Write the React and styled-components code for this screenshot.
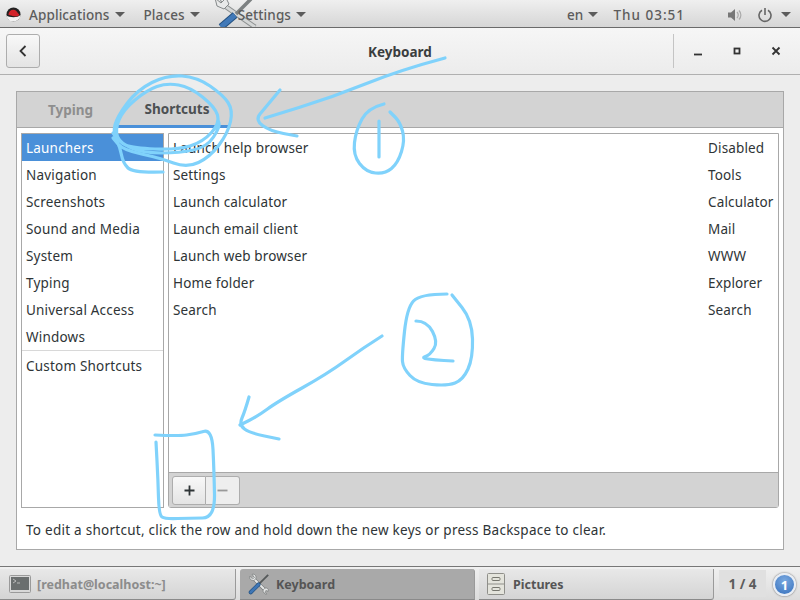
import React from "react";
import styled, { createGlobalStyle } from "styled-components";

const launchers = [
  ["Launch help browser", "Disabled"],
  ["Settings", "Tools"],
  ["Launch calculator", "Calculator"],
  ["Launch email client", "Mail"],
  ["Launch web browser", "WWW"],
  ["Home folder", "Explorer"],
  ["Search", "Search"],
];

const categories = [
  "Launchers",
  "Navigation",
  "Screenshots",
  "Sound and Media",
  "System",
  "Typing",
  "Universal Access",
  "Windows",
];

// hand-drawn marks, given as points and smoothed through their midpoints
const smooth = (pts) => {
  let d = `M${pts[0][0]} ${pts[0][1]}`;
  for (let i = 1; i < pts.length - 1; i++) {
    const mx = (pts[i][0] + pts[i + 1][0]) / 2;
    const my = (pts[i][1] + pts[i + 1][1]) / 2;
    d += `Q${pts[i][0]} ${pts[i][1]} ${mx} ${my}`;
  }
  const last = pts[pts.length - 1];
  return `${d}L${last[0]} ${last[1]}`;
};

const marks = [
  [[163, 172], [133, 173], [123, 163], [120, 147], [113, 133], [117, 117], [137, 90], [167, 75], [197, 77], [223, 95], [233, 110], [228, 133], [210, 157], [187, 168], [160, 158], [123, 150], [113, 138]],
  [[113, 133], [120, 143], [133, 148], [177, 150], [203, 142], [220, 123], [215, 107], [190, 87], [167, 83], [147, 90], [123, 110], [115, 130], [120, 143], [143, 153], [180, 153], [207, 147], [220, 127], [218, 120]],
  [[445, 58], [400, 70], [333, 97], [265, 118]],
  [[280, 90], [265, 108], [255, 120], [270, 131], [297, 136]],
  [[384, 104], [368, 108], [356, 130], [353, 155], [366, 172], [385, 174], [398, 163], [405, 140], [400, 122], [390, 112]],
  [[379, 121], [379, 157]],
  [[447, 294], [420, 294], [407, 308], [402, 355], [403, 368], [417, 383], [447, 386], [463, 380], [473, 358], [472, 320], [452, 295]],
  [[416, 321], [427, 321], [438, 342], [430, 355], [421, 358], [435, 360], [453, 361]],
  [[382, 336], [363, 348], [327, 374], [277, 402], [258, 416], [240, 425]],
  [[249, 397], [245, 411], [239, 425], [250, 433], [279, 439]],
  [[155, 435], [178, 436], [195, 434], [212, 429], [214, 470], [215, 518], [190, 518], [165, 519], [159, 515], [158, 480], [156, 442]],
];

const Annotations = () => (
  <Ink viewBox="0 0 800 600">
    {marks.map((pts, i) => (
      <path key={i} d={smooth(pts)} />
    ))}
  </Ink>
);

const ToolsIcon = ({ size = 22 }) => (
  <svg width={size} height={size} viewBox="0 0 24 24">
    <path d="M5 5L20 20" stroke="#6f7373" strokeWidth="3.600" />
    <path d="M5 5L20 20" stroke="#e6e7e7" strokeWidth="2.200" />
    <path d="M2 3.500L5 6.500 7 5 4.500 1.500C7 0.500 9.500 3 8.500 6L7 8C4 9 1 6.500 2 3.500z" fill="#e6e7e7" stroke="#6f7373" strokeWidth="0.700" />
    <path d="M22 20L19.500 19 18.500 21 20.500 23C18 23.500 16 21 16.500 18.500L18.500 16.500C21 16 23 17.500 22 20z" fill="#e6e7e7" stroke="#6f7373" strokeWidth="0.700" />
    <path d="M22 2L11 13" stroke="#55595a" strokeWidth="2" />
    <path d="M11.500 12.500L3 21" stroke="#23507f" strokeWidth="4.400" strokeLinecap="round" />
    <path d="M11.500 12.500L3 21" stroke="#3f76b5" strokeWidth="3" strokeLinecap="round" />
  </svg>
);

const App = () => (
  <Screen>
    <GlobalStyle />
    <TopBar>
      <MenuGroup>
        <RedHat viewBox="0 0 16 16">
          <circle cx="8" cy="8" r="7.500" fill="#222" />
          <path d="M0.600 9C3 11 12 12 15.400 8.500C15.600 12 12 15.500 8 15.500C4 15.500 1 13 0.600 9z" fill="#f2f2f2" />
          <path d="M2.500 8C3 5 5 3 8 3C10 3 11 4 12 5.500L14 8C14.500 10 10 10.500 7 9.500C5 9 3 8.800 2.500 8z" fill="#d2232a" />
        </RedHat>
        <MenuLabel>Applications</MenuLabel>
        <Caret />
        <PlacesLabel>Places</PlacesLabel>
        <Caret />
        <SettingsItem>
          <BigTools viewBox="0 0 46 27">
            <path d="M4 2L40 27" stroke="#8b8f8f" strokeWidth="5" />
            <path d="M4 2L40 27" stroke="#d4d6d6" strokeWidth="3" />
            <path d="M0 -2L6 3 11 -2 14 4 9 9 2 6z" fill="#e8e9e9" stroke="#85898a" strokeWidth="1" />
            <path d="M36 -1L21 14" stroke="#7d8182" strokeWidth="3.500" />
            <path d="M20 15L6 27" stroke="#23507f" strokeWidth="7" />
            <path d="M20 15L6 27" stroke="#4179b8" strokeWidth="5" />
          </BigTools>
          <SettingsLabel>Settings</SettingsLabel>
          <Caret />
        </SettingsItem>
      </MenuGroup>
      <StatusGroup>
        <MenuLabel>en</MenuLabel>
        <Caret />
        <Clock>Thu 03:51</Clock>
        <svg width="16" height="16" viewBox="0 0 16 16">
          <path d="M1 5.500h3L8 2v12L4 10.500H1z" fill="#777" />
          <path d="M10 5c1.500 1.800 1.500 4.200 0 6M12 3.500c2.500 2.600 2.500 6.400 0 9" fill="none" stroke="#aaa" strokeWidth="1.200" />
        </svg>
        <PowerIcon width="16" height="16" viewBox="0 0 16 16">
          <path d="M5 3.200a6 6 0 1 0 6 0M8 1v7" fill="none" stroke="#666" strokeWidth="1.600" />
        </PowerIcon>
        <Caret />
      </StatusGroup>
    </TopBar>

    <HeaderBar>
      <BackButton>
        <svg width="12" height="14" viewBox="0 0 12 14">
          <path d="M8.500 2L3.500 7l5 5" fill="none" stroke="#333" strokeWidth="1.800" />
        </svg>
      </BackButton>
      <Title>Keyboard</Title>
      <WindowControls>
        <svg width="10" height="10" viewBox="0 0 10 10">
          <path d="M1 8.500h8" stroke="#333" strokeWidth="1.800" />
        </svg>
        <svg width="10" height="10" viewBox="0 0 10 10">
          <rect x="2.500" y="2.500" width="5" height="5" fill="none" stroke="#333" strokeWidth="1.800" />
        </svg>
        <svg width="10" height="10" viewBox="0 0 10 10">
          <path d="M1.500 1.500l7 7M8.500 1.500l-7 7" stroke="#333" strokeWidth="1.800" />
        </svg>
      </WindowControls>
    </HeaderBar>

    <Content>
      <Notebook>
        <TabStrip>
          <Tab>Typing</Tab>
          <Tab $active>Shortcuts</Tab>
        </TabStrip>
        <TabBody>
          <Panes>
            <Sidebar>
              {categories.map((name, i) => (
                <SideRow key={name} $selected={i === 0}>{name}</SideRow>
              ))}
              <SideDivider />
              <SideRow>Custom Shortcuts</SideRow>
            </Sidebar>
            <ShortcutPane>
              <ShortcutList>
                {launchers.map(([name, key]) => (
                  <ShortcutRow key={name}>
                    <span>{name}</span>
                    <KeyCell>{key}</KeyCell>
                  </ShortcutRow>
                ))}
              </ShortcutList>
              <PaneToolbar>
                <PlusButton>
                  <svg width="11" height="11" viewBox="0 0 11 11">
                    <path d="M5.500 0.500v10M0.500 5.500h10" stroke="#2e3436" strokeWidth="1.800" />
                  </svg>
                </PlusButton>
                <MinusButton>
                  <svg width="11" height="11" viewBox="0 0 11 11">
                    <path d="M0.500 5.500h10" stroke="#999" strokeWidth="1.800" />
                  </svg>
                </MinusButton>
              </PaneToolbar>
            </ShortcutPane>
          </Panes>
          <Hint>To edit a shortcut, click the row and hold down the new keys or press Backspace to clear.</Hint>
        </TabBody>
      </Notebook>
    </Content>

    <TaskBar>
      <TaskButton $first>
        <svg width="22" height="18" viewBox="0 0 22 18">
          <rect x="0.500" y="0.500" width="21" height="17" rx="1" fill="#d8d8d8" stroke="#9a9a9a" />
          <rect x="2" y="2" width="18" height="13" fill="#6a6e6e" />
          <path d="M4 4l3 2-3 2M8 8h3" fill="none" stroke="#ccc" strokeWidth="0.800" />
        </svg>
        <TerminalLabel>[redhat@localhost:~]</TerminalLabel>
      </TaskButton>
      <TaskButton $active>
        <ToolsIcon />
        <TaskLabel>Keyboard</TaskLabel>
      </TaskButton>
      <TaskButton>
        <svg width="18" height="22" viewBox="0 0 18 22">
          <rect x="0.500" y="0.500" width="17" height="21" rx="1" fill="#e4e4dc" stroke="#8f8f8a" />
          <path d="M1 11h16" stroke="#8f8f8a" />
          <rect x="5" y="4.500" width="8" height="3" rx="1" fill="none" stroke="#77776f" />
          <rect x="5" y="14.500" width="8" height="3" rx="1" fill="none" stroke="#77776f" />
        </svg>
        <PicturesLabel>Pictures</PicturesLabel>
      </TaskButton>
      <Pager>1 / 4</Pager>
      <Badge>1</Badge>
    </TaskBar>

    <Annotations />
  </Screen>
);

const GlobalStyle = createGlobalStyle`
  html, body {
    margin: 0;
    padding: 0;
    background: #ededed;
  }
  * {
    box-sizing: border-box;
  }
`;

const Screen = styled.div`
  position: relative;
  width: 800px;
  height: 600px;
  display: flex;
  flex-direction: column;
  overflow: hidden;
  font-family: "Noto Sans", "Open Sans", sans-serif;
  font-size: 13.5px;
  color: #2e3436;
  background: #ededed;
`;

const Ink = styled.svg`
  position: absolute;
  left: 0;
  top: 0;
  width: 800px;
  height: 600px;
  pointer-events: none;

  path {
    fill: none;
    stroke: #80d2fb;
    stroke-width: 3.2;
    stroke-linecap: round;
    stroke-linejoin: round;
  }
`;

const TopBar = styled.header`
  height: 28px;
  flex: none;
  display: flex;
  align-items: center;
  justify-content: space-between;
  padding: 2px 9px 0 6px;
  background: linear-gradient(#efefef, #d6d6d6);
  border-bottom: 1px solid #6a6a6a;
  color: #5c5c5c;
  font-weight: 500;
`;

const MenuGroup = styled.div`
  display: flex;
  align-items: center;
`;

const StatusGroup = styled.div`
  display: flex;
  align-items: center;
`;

const RedHat = styled.svg`
  width: 15px;
  height: 15px;
  margin-right: 8px;
`;

const MenuLabel = styled.span`
  position: relative;
  letter-spacing: 0.1px;
`;

const PlacesLabel = styled(MenuLabel)`
  margin-left: 19px;
`;

const SettingsItem = styled.div`
  position: relative;
  display: flex;
  align-items: center;
  margin-left: 38px;
`;

// the oversized launcher icon sits behind the label, cut off by the panel edges
const BigTools = styled.svg`
  position: absolute;
  left: -23px;
  top: -6px;
  width: 46px;
  height: 27px;
`;

const SettingsLabel = styled(MenuLabel)``;

const Caret = styled.i`
  width: 0;
  height: 0;
  margin-left: 5px;
  border-left: 5px solid transparent;
  border-right: 5px solid transparent;
  border-top: 5px solid #5c5c5c;
`;

const Clock = styled.span`
  margin: 0 42px 0 15px;
  letter-spacing: 1px;
`;

const PowerIcon = styled.svg`
  margin-left: 14px;
  margin-right: 3px;
`;

const HeaderBar = styled.div`
  height: 47px;
  flex: none;
  display: flex;
  align-items: center;
  justify-content: space-between;
  position: relative;
  padding: 0 0 0 6px;
  background: linear-gradient(#f6f6f6, #ececec);
  border-bottom: 1px solid #b0b0b0;
`;

const BackButton = styled.button`
  width: 34px;
  height: 34px;
  padding: 0;
  display: flex;
  align-items: center;
  justify-content: center;
  background: linear-gradient(#f8f8f8, #e4e4e4);
  border: 1px solid #adadad;
  border-radius: 3px;
`;

const Title = styled.div`
  position: absolute;
  left: 0;
  right: 0;
  padding-top: 2px;
  text-align: center;
  font-weight: 700;
  font-size: 13.5px;
  color: #3a3d3e;
  pointer-events: none;
`;

const WindowControls = styled.div`
  height: 34px;
  width: 127px;
  display: flex;
  align-items: center;
  justify-content: space-around;
  padding: 0 4px;
  border-left: 1px solid #c4c4c4;
`;

const Content = styled.main`
  flex: 1;
  display: flex;
  padding: 16px;
  min-height: 0;
`;

const Notebook = styled.section`
  flex: 1;
  display: flex;
  flex-direction: column;
  background: #fff;
  border: 1px solid #a8a8a8;
`;

const TabStrip = styled.div`
  height: 36px;
  flex: none;
  display: flex;
  background: #d3d3d3;
  border-bottom: 1px solid #a8a8a8;
`;

const Tab = styled.div`
  width: ${(p) => (p.$active ? "113px" : "100px")};
  display: flex;
  align-items: center;
  justify-content: center;
  padding-left: 7px;
  font-weight: 700;
  color: ${(p) => (p.$active ? "#4c5052" : "#8e8e8e")};
  border-bottom: ${(p) => (p.$active ? "3px solid #4a90d9" : "none")};
  margin-bottom: -1px;
`;

const TabBody = styled.div`
  flex: 1;
  display: flex;
  flex-direction: column;
  padding: 5px 4px 0;
  min-height: 0;
`;

const Panes = styled.div`
  height: 375px;
  flex: none;
  display: flex;
  gap: 4px;
`;

const Sidebar = styled.nav`
  width: 143px;
  flex: none;
  border: 1px solid #a8a8a8;
  letter-spacing: 0.2px;
`;

const SideRow = styled.div`
  height: 27px;
  display: flex;
  align-items: center;
  padding-left: 4px;
  background: ${(p) => (p.$selected ? "#4a90d9" : "transparent")};
  color: ${(p) => (p.$selected ? "#fff" : "#2e3436")};
`;

const SideDivider = styled.div`
  height: 1px;
  background: #d8d8d8;
  margin-bottom: 1px;
`;

const ShortcutPane = styled.div`
  flex: 1;
  display: flex;
  flex-direction: column;
  border: 1px solid #a8a8a8;
  border-bottom-right-radius: 3px;
  border-bottom-left-radius: 3px;
`;

const ShortcutList = styled.div`
  flex: 1;
  letter-spacing: 0.15px;
`;

const ShortcutRow = styled.div`
  height: 27px;
  display: grid;
  grid-template-columns: 1fr 70px;
  align-items: center;
  padding-left: 4px;
`;

const KeyCell = styled.span`
  white-space: nowrap;
`;

const PaneToolbar = styled.div`
  height: 35px;
  flex: none;
  display: flex;
  align-items: center;
  padding-left: 3px;
  background: #d3d3d3;
  border-top: 1px solid #a8a8a8;
`;

const PlusButton = styled.button`
  width: 34px;
  height: 29px;
  padding: 0;
  display: flex;
  align-items: center;
  justify-content: center;
  background: linear-gradient(#f8f8f8, #e4e4e4);
  border: 1px solid #adadad;
  border-radius: 3px 0 0 3px;
`;

const MinusButton = styled(PlusButton)`
  background: #eeeeee;
  border-left: none;
  border-radius: 0 3px 3px 0;
`;

const Hint = styled.p`
  margin: 0;
  flex: 1;
  display: flex;
  align-items: center;
  padding: 2px 0 0 5px;
  white-space: nowrap;
  letter-spacing: 0.26px;
`;

const TaskBar = styled.footer`
  height: 34px;
  flex: none;
  display: flex;
  align-items: stretch;
  padding: 2px 4px 0 0;
  background: linear-gradient(#f0f0f0, #dcdcdc);
  border-top: 1px solid #777;
`;

const TaskButton = styled.div`
  width: ${(p) => (p.$first ? "236px" : "235px")};
  margin-right: 4px;
  display: flex;
  align-items: center;
  gap: 6px;
  padding-left: ${(p) => (p.$first ? "9px" : "8px")};
  background: ${(p) => (p.$active ? "#a9a9a9" : "linear-gradient(#e8e8e8, #d4d4d4)")};
  border-right: 1px solid #9a9a9a;
  border-bottom: 1px solid #8a8a8a;
  border-radius: ${(p) => (p.$active ? "3px 3px 0 0" : "0 0 3px 0")};
`;

const TaskLabel = styled.span`
  font-weight: 700;
  font-size: 12.5px;
  color: #555;
`;

const TerminalLabel = styled(TaskLabel)`
  color: #8c8c8c;
`;

const PicturesLabel = styled(TaskLabel)`
  margin-left: 2px;
`;

const Pager = styled.div`
  width: 47px;
  margin: 1px 0 3px 1px;
  display: flex;
  align-items: center;
  justify-content: center;
  font-weight: 700;
  color: #5c5c5c;
  background: #e0e0e0;
`;

const Badge = styled.div`
  width: 23px;
  height: 23px;
  margin: 4px 0 0 7px;
  display: flex;
  align-items: center;
  justify-content: center;
  color: #fff;
  font-weight: 700;
  font-size: 13px;
  border-radius: 50%;
  border: 2px solid #e9eef5;
  box-shadow: 0 0 2px #555;
  background: radial-gradient(circle at 50% 30%, #7aa9e0, #3570bd);
`;

export default App;
